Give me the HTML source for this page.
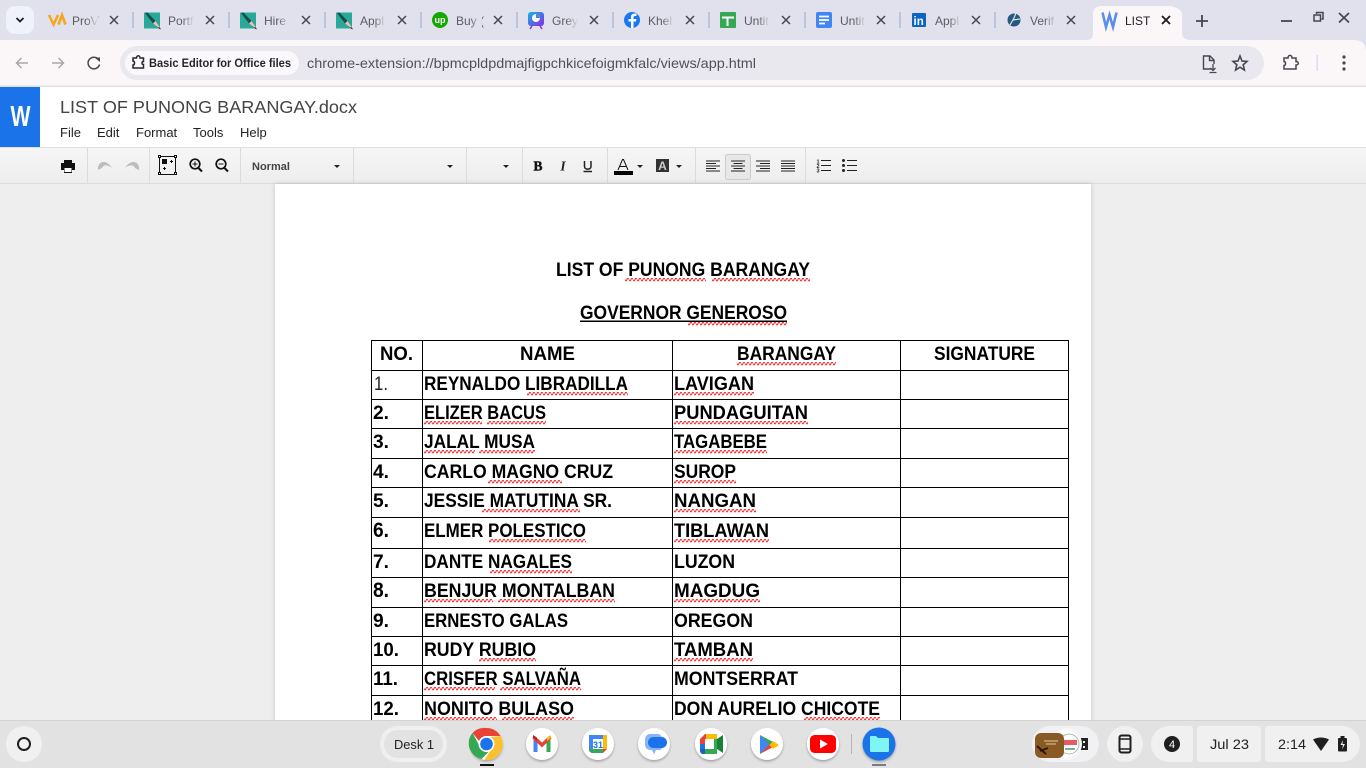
<!DOCTYPE html>
<html lang="en"><head><meta charset="utf-8"><title>LIST OF PUNONG BARANGAY.docx</title>
<style>
html,body{margin:0;padding:0;width:1366px;height:768px;overflow:hidden;background:#eee}
svg{display:block;font-family:"Liberation Sans",sans-serif}
.d{font-weight:700;font-size:19.5px;fill:#000}
.t{font-size:12px;fill:#5b5c63}
.m{font-size:13px;fill:#222}
.ln{stroke:#000;stroke-width:1;shape-rendering:crispEdges}
.sep{stroke:#b9c5e0;stroke-width:2}
.ts{stroke:#dcdcdc;stroke-width:1;shape-rendering:crispEdges}
</style></head><body>
<svg width="1366" height="768" viewBox="0 0 1366 768" xmlns="http://www.w3.org/2000/svg">
<defs>
<pattern id="sq" patternUnits="userSpaceOnUse" width="4" height="4"><path d="M0 1.500 Q1 4.300 2 1.500 Q3 -1.300 4 1.500" fill="none" stroke="#f03030" stroke-width="1.100"/></pattern>
<linearGradient id="tb" x1="0" y1="0" x2="0" y2="1"><stop offset="0" stop-color="#f6f6f6"/><stop offset="1" stop-color="#ededed"/></linearGradient>
<linearGradient id="fade"><stop offset="0" stop-color="#e0e1ec" stop-opacity="0"/><stop offset="1" stop-color="#e0e1ec"/></linearGradient>
<linearGradient id="grey" x1="0" y1="0" x2="1" y2="1"><stop offset="0" stop-color="#12b5e8"/><stop offset="1" stop-color="#8b2be2"/></linearGradient>
<filter id="sh" x="-30%" y="-30%" width="160%" height="170%"><feDropShadow dx="0" dy="1.5" stdDeviation="1.2" flood-color="#000" flood-opacity=".3"/></filter>
<filter id="pg" x="-3%" y="-3%" width="106%" height="106%"><feDropShadow dx="0" dy="0" stdDeviation="2.5" flood-color="#000" flood-opacity=".18"/></filter>
<symbol id="x" width="12" height="12" viewBox="0 0 12 12" overflow="visible"><path d="M2 2 10 10M10 2 2 10" stroke="#45464f" stroke-width="1.500" fill="none"/></symbol>
<symbol id="pen" width="17" height="17" viewBox="0 0 17 17" overflow="visible"><rect width="16" height="16" y=".5" fill="#2aa99b"/><path d="M1 1 3.500 .5 11.500 9 9 11.500Z" fill="#14504a"/><path d="M9 11.500 11.500 9 15.500 15 16 16.500Z" fill="#f5bfa6"/><path d="M14.500 15.500 16.500 17" stroke="#222" stroke-width="1"/></symbol>
<symbol id="al" width="16" height="14" viewBox="0 0 16 14"><path d="M1 1.500H15M1 4H11M1 6.500H15M1 9H11M1 11.500H15" stroke="#222" stroke-width="1" fill="none"/></symbol>
</defs>

<!-- tab strip -->
<rect width="1366" height="40" fill="#e0e1ec"/>
<rect x="6" y="6" width="28" height="28" rx="9" fill="#eff1fb"/>
<path d="M16.500 18 20 21.500 23.500 18" fill="none" stroke="#1b1b22" stroke-width="1.800"/>

<path d="M49 15 53.500 24.500 58 15M58.500 24.500 62 15 65.500 24.500" fill="none" stroke="#f5a623" stroke-width="2.600"/>
<text class="t" x="72" y="25" font-size="12">ProV</text><rect x="86" y="10" width="12" height="20" fill="url(#fade)"/>
<use href="#x" x="108" y="14"/><line class="sep" x1="133" y1="12" x2="133" y2="28"/>

<use href="#pen" x="144" y="12"/>
<text class="t" x="168" y="25">Portf</text><rect x="182" y="10" width="12" height="20" fill="url(#fade)"/>
<use href="#x" x="204" y="14"/><line class="sep" x1="229" y1="12" x2="229" y2="28"/>

<use href="#pen" x="240" y="12"/>
<text class="t" x="264" y="25">Hire</text><rect x="278" y="10" width="12" height="20" fill="url(#fade)"/>
<use href="#x" x="300" y="14"/><line class="sep" x1="325" y1="12" x2="325" y2="28"/>

<use href="#pen" x="336" y="12"/>
<text class="t" x="360" y="25">Appl</text><rect x="374" y="10" width="12" height="20" fill="url(#fade)"/>
<use href="#x" x="396" y="14"/><line class="sep" x1="421" y1="12" x2="421" y2="28"/>

<circle cx="440" cy="20" r="8" fill="#14a800"/><text x="440" y="23" text-anchor="middle" font-size="9" font-weight="700" fill="#fff">up</text>
<text class="t" x="456" y="25">Buy (</text><rect x="470" y="10" width="12" height="20" fill="url(#fade)"/>
<use href="#x" x="492" y="14"/><line class="sep" x1="517" y1="12" x2="517" y2="28"/>

<rect x="528" y="12" width="16" height="14" rx="3" fill="url(#grey)"/><circle cx="536" cy="18" r="4" fill="#fff"/><path d="M536 18V14A4 4 0 0 1 540 18Z" fill="#3a8be0"/><path d="M532 26 530 29M540 26 542 29" stroke="#8b2be2" stroke-width="1.500"/>
<text class="t" x="552" y="25">Grey</text><rect x="566" y="10" width="12" height="20" fill="url(#fade)"/>
<use href="#x" x="588" y="14"/><line class="sep" x1="613" y1="12" x2="613" y2="28"/>

<circle cx="632" cy="20" r="8" fill="#1877f2"/><path d="M633.500 28V21.500H636L636.400 19H633.500V17.300C633.500 16.500 634 16 634.900 16H636.500V13.600C635 13.300 631 13 631 16.800V19H628.500V21.500H631V28Z" fill="#fff"/>
<text class="t" x="648" y="25">Khel</text><rect x="662" y="10" width="12" height="20" fill="url(#fade)"/>
<use href="#x" x="684" y="14"/><line class="sep" x1="709" y1="12" x2="709" y2="28"/>

<rect x="720" y="12" width="16" height="16" rx="1" fill="#34a853"/><path d="M722 17.500H734M727.500 17.500V26" stroke="#fff" stroke-width="2" fill="none"/>
<text class="t" x="744" y="25">Untit</text><rect x="758" y="10" width="12" height="20" fill="url(#fade)"/>
<use href="#x" x="780" y="14"/><line class="sep" x1="805" y1="12" x2="805" y2="28"/>

<rect x="816" y="12" width="16" height="16" rx="2" fill="#4285f4"/><path d="M819 16.500H829M819 20H829M819 23.500H825" stroke="#fff" stroke-width="1.700" fill="none"/>
<text class="t" x="840" y="25">Untit</text><rect x="854" y="10" width="12" height="20" fill="url(#fade)"/>
<use href="#x" x="875" y="14"/><line class="sep" x1="900" y1="12" x2="900" y2="28"/>

<rect x="912" y="13" width="14" height="14" rx="1" fill="#0a66c2"/><text x="913.500" y="25" font-size="11.500" font-weight="700" fill="#fff">in</text>
<text class="t" x="935" y="25">Appl</text><rect x="949" y="10" width="12" height="20" fill="url(#fade)"/>
<use href="#x" x="970" y="14"/><line class="sep" x1="995" y1="12" x2="995" y2="28"/>

<circle cx="1014" cy="20" r="6.500" fill="#245a7e"/><path d="M1010 25 1014 18 1016 13M1013 20 1020 19" stroke="#e0e1ec" stroke-width="1.200" fill="none"/>
<text class="t" x="1030" y="25">Verif</text><rect x="1044" y="10" width="12" height="20" fill="url(#fade)"/>
<use href="#x" x="1065" y="14"/>

<!-- active tab -->
<path d="M1087 40C1092 40 1093 37 1093 33V14C1093 9 1096 6 1101 6H1168C1173 6 1182 9 1182 14V33C1182 37 1185 40 1190 40Z" fill="#fbf7f9"/>
<path d="M1102.500 12.500 1106 27 1109.500 15 1113 27 1116.500 12.500" fill="none" stroke="#5a8fe8" stroke-width="2.600"/>
<text x="1125" y="25" font-size="12" fill="#1f1f25">LIST</text>
<path d="M1162 16 1170 24M1170 16 1162 24" stroke="#1b1b22" stroke-width="1.800"/>

<path d="M1202 15V27M1196 21H1208" stroke="#45464f" stroke-width="1.800"/>
<path d="M1281 21H1292" stroke="#45464f" stroke-width="1.800"/>
<path d="M1316.500 14V12.500H1323V19H1321.500M1314 15H1320.500V21H1314Z" fill="none" stroke="#45464f" stroke-width="1.500"/>
<path d="M1339 13 1349 22.500M1349 13 1339 22.500" stroke="#45464f" stroke-width="1.700"/>

<!-- toolbar -->
<rect y="40" width="1366" height="46" fill="#fbf7f9"/>
<path d="M0 52Q0 40 12 40V52Z" fill="#e0e1ec" opacity="0"/><path d="M1366 52Q1366 40 1354 40H1366Z" fill="#e0e1ec"/>
<rect x="0" y="85.500" width="1366" height="1.500" fill="#e2dfe1"/>
<path d="M28 63H17M21.500 58 16.500 63 21.500 68" fill="none" stroke="#a9a9ad" stroke-width="1.500"/>
<path d="M52 63H63M58.500 58 63.500 63 58.500 68" fill="none" stroke="#a9a9ad" stroke-width="1.500"/>
<path d="M98.500 59.500A5.800 5.800 0 1 0 99.500 64.500" fill="none" stroke="#45464f" stroke-width="1.500"/><path d="M94.500 57.500H100V62Z" fill="#45464f"/>
<rect x="120" y="46" width="1144" height="34" rx="17" fill="#e9e8ee"/>
<rect x="125" y="51" width="174" height="24" rx="12" fill="#fbf8fb"/>
<path d="M133 58H136.500C136.500 55 140 55 140 58H143.500V61.500C141.500 61.500 141.500 64.500 143.500 64.500V68H133V65C135 65 135 61 133 61Z" fill="none" stroke="#26262c" stroke-width="1.500"/>
<text x="149" y="67" font-size="12" font-weight="700" fill="#26262c" textLength="142" lengthAdjust="spacingAndGlyphs">Basic Editor for Office files</text>
<text x="307" y="68" font-size="14" fill="#50515a" textLength="449" lengthAdjust="spacingAndGlyphs">chrome-extension://bpmcpldpdmajfigpchkicefoigmkfalc/views/app.html</text>
<path d="M1211 69H1203.500V56H1210L1214 60V64M1209.500 56V60.500H1214" fill="none" stroke="#45464f" stroke-width="1.400"/><path d="M1213 64V70M1210.500 68 1213 70.500 1215.500 68M1209.500 72.500H1216.500" fill="none" stroke="#45464f" stroke-width="1.300"/>
<path d="M1240 56 1242 61 1247 61.400 1243.200 64.800 1244.400 70 1240 67.200 1235.600 70 1236.800 64.800 1233 61.400 1238 61Z" fill="none" stroke="#45464f" stroke-width="1.600"/>
<path d="M1284 58H1288C1288 54.500 1292 54.500 1292 58H1296V61.500C1299 61.500 1299 65 1296 65V69H1284V65.500C1286 65.500 1286 61.500 1284 61.500Z" fill="none" stroke="#45464f" stroke-width="1.500"/>
<rect x="1316.500" y="55" width="1.500" height="16" fill="#d3dff8"/>
<circle cx="1344" cy="57" r="1.600" fill="#45464f"/><circle cx="1344" cy="63" r="1.600" fill="#45464f"/><circle cx="1344" cy="69" r="1.600" fill="#45464f"/>

<!-- doc header -->
<rect y="87" width="1366" height="61" fill="#fff"/>
<rect x="0" y="87" width="40" height="60" fill="#1a73e8"/>
<text x="10.500" y="126" font-size="29" font-weight="700" fill="#fff" textLength="20" lengthAdjust="spacingAndGlyphs">W</text>
<text x="60" y="113" font-size="17.500" fill="#444" textLength="297" lengthAdjust="spacingAndGlyphs">LIST OF PUNONG BARANGAY.docx</text>
<text class="m" x="60" y="137">File</text><text class="m" x="97" y="137">Edit</text><text class="m" x="136" y="137">Format</text><text class="m" x="193" y="137">Tools</text><text class="m" x="240" y="137">Help</text>

<!-- editor toolbar -->
<rect y="147" width="1366" height="37" fill="url(#tb)"/>
<line x1="0" y1="147.500" x2="1366" y2="147.500" stroke="#e0e0e0"/><line x1="0" y1="183.500" x2="1366" y2="183.500" stroke="#dcdcdc"/>
<line class="ts" x1="87.500" y1="148" x2="87.500" y2="183"/><line class="ts" x1="149.500" y1="148" x2="149.500" y2="183"/><line class="ts" x1="240.500" y1="148" x2="240.500" y2="183"/><line class="ts" x1="353.500" y1="148" x2="353.500" y2="183"/><line class="ts" x1="466.500" y1="148" x2="466.500" y2="183"/><line class="ts" x1="522.500" y1="148" x2="522.500" y2="183"/><line class="ts" x1="607.500" y1="148" x2="607.500" y2="183"/><line class="ts" x1="695.500" y1="148" x2="695.500" y2="183"/><line class="ts" x1="805.500" y1="148" x2="805.500" y2="183"/>
<path d="M64 160H72V163H75V170H72V173H64V170H61V163H64Z" fill="#111"/><rect x="64.500" y="168" width="7" height="4" fill="#fff"/>
<path d="M98 167C100 160 107 160 112 168C107 164 103 165 102 168L98 170Z" fill="#bdbdbd"/><path d="M139 167C137 160 130 160 125 168C130 164 134 165 135 168L139 170Z" fill="#bdbdbd"/>
<rect x="159.500" y="156.500" width="16" height="18" fill="none" stroke="#111" stroke-width="1"/>
<g fill="#fff" stroke="#111"><rect x="158.500" y="155.500" width="2" height="2"/><rect x="174.500" y="155.500" width="2" height="2"/><rect x="158.500" y="172.500" width="2" height="2"/><rect x="174.500" y="172.500" width="2" height="2"/></g>
<rect x="162" y="159" width="5" height="5" fill="#111"/><path d="M171.500 160V163M170 161.500H173M164.500 167V170M163 168.500H166" stroke="#111" stroke-width="1"/>
<circle cx="195" cy="164" r="4.800" fill="none" stroke="#111" stroke-width="1.700"/><path d="M198.500 168 202 171.500" stroke="#111" stroke-width="2"/><path d="M195 161.500V166.500M192.500 164H197.500" stroke="#111"/>
<circle cx="221" cy="164" r="4.800" fill="none" stroke="#111" stroke-width="1.700"/><path d="M224.500 168 228 171.500" stroke="#111" stroke-width="2"/><path d="M218.500 164H223.500" stroke="#111"/>
<text x="252" y="170" font-size="11" font-weight="700" fill="#444">Normal</text>
<path d="M334 165H340L337 168Z" fill="#222"/><path d="M447 165H453L450 168Z" fill="#222"/><path d="M503 165H509L506 168Z" fill="#222"/>
<text x="538" y="170.500" text-anchor="middle" font-size="13.500" font-weight="700" fill="#111" stroke="#111" stroke-width=".4" font-family="Liberation Serif">B</text>
<text x="563" y="170.500" text-anchor="middle" font-size="13.500" font-style="italic" font-weight="700" fill="#222" font-family="Liberation Serif">I</text>
<path d="M584.500 161V166.500C584.500 170 591 170 591 166.500V161M583.500 171.500H592" fill="none" stroke="#222" stroke-width="1.500"/>
<path d="M618 170 622.500 159.500H623.500L628 170M620 166.500H626" fill="none" stroke="#111"/><rect x="614" y="171" width="19" height="4" fill="#000"/>
<path d="M637 165H643L640 168Z" fill="#222"/>
<rect x="656" y="159" width="13" height="13" fill="#333"/><text x="662.500" y="170" text-anchor="middle" font-size="12" font-weight="700" fill="#ccc">A</text>
<path d="M676 165H682L679 168Z" fill="#222"/>
<rect x="725.500" y="154.500" width="25" height="25" rx="2" fill="#e8e8e8" stroke="#ccc"/>
<use href="#al" x="705" y="159.500"/>
<path d="M731 161H745M733.500 163.500H742.500M731 166H745M733.500 168.500H742.500M731 171H745" stroke="#222" fill="none"/>
<path d="M756 161H770M760 163.500H770M756 166H770M760 168.500H770M756 171H770" stroke="#222" fill="none"/>
<path d="M781 161H795M781 163.500H795M781 166H795M781 168.500H795M781 171H795" stroke="#222" fill="none"/>
<text x="816.500" y="163.500" font-size="5.500" font-weight="700" fill="#222">1</text><text x="816.500" y="168" font-size="5.500" font-weight="700" fill="#222">2</text><text x="816.500" y="172.500" font-size="5.500" font-weight="700" fill="#222">3</text>
<path d="M821 160.500H831M821 165.500H831M821 170.500H831" stroke="#222"/>
<circle cx="843.500" cy="160.500" r="1.500" fill="#222"/><circle cx="843.500" cy="165.500" r="1.500" fill="#222"/><circle cx="843.500" cy="170.500" r="1.500" fill="#222"/><path d="M847 160.500H857M847 165.500H857M847 170.500H857" stroke="#222"/>

<!-- document -->
<rect y="184" width="1366" height="536" fill="#eeeeee"/>
<rect x="275" y="184" width="816" height="560" fill="#fff" filter="url(#pg)"/>

<text class="d" x="556" y="276" textLength="254" lengthAdjust="spacingAndGlyphs">LIST OF PUNONG BARANGAY</text>
<text class="d" x="580" y="319" textLength="207" lengthAdjust="spacingAndGlyphs">GOVERNOR GENEROSO</text>
<rect x="580" y="320.500" width="207" height="1.500" fill="#000"/>
<rect transform="translate(625,278)" width="81" height="4" fill="url(#sq)"/><rect transform="translate(712,278)" width="98" height="4" fill="url(#sq)"/>
<rect transform="translate(688,322)" width="99" height="4" fill="url(#sq)"/>

<!-- table lines -->
<g class="ln">
<line x1="371" y1="340.500" x2="1069" y2="340.500"/><line x1="371" y1="370.500" x2="1069" y2="370.500"/><line x1="371" y1="399.500" x2="1069" y2="399.500"/><line x1="371" y1="428.500" x2="1069" y2="428.500"/><line x1="371" y1="458.500" x2="1069" y2="458.500"/><line x1="371" y1="487.500" x2="1069" y2="487.500"/><line x1="371" y1="517.500" x2="1069" y2="517.500"/><line x1="371" y1="548.500" x2="1069" y2="548.500"/><line x1="371" y1="577.500" x2="1069" y2="577.500"/><line x1="371" y1="607.500" x2="1069" y2="607.500"/><line x1="371" y1="636.500" x2="1069" y2="636.500"/><line x1="371" y1="665.500" x2="1069" y2="665.500"/><line x1="371" y1="695.500" x2="1069" y2="695.500"/>
<line x1="371.500" y1="340" x2="371.500" y2="720"/><line x1="422.500" y1="340" x2="422.500" y2="720"/><line x1="672.500" y1="340" x2="672.500" y2="720"/><line x1="900.500" y1="340" x2="900.500" y2="720"/><line x1="1068.500" y1="340" x2="1068.500" y2="720"/>
</g>

<text class="d" x="380" y="360" textLength="33" lengthAdjust="spacingAndGlyphs">NO.</text>
<text class="d" x="520" y="360" textLength="55" lengthAdjust="spacingAndGlyphs">NAME</text>
<text class="d" x="737" y="360" textLength="99" lengthAdjust="spacingAndGlyphs">BARANGAY</text>
<text class="d" x="934" y="360" textLength="101" lengthAdjust="spacingAndGlyphs">SIGNATURE</text>
<rect transform="translate(737,362)" width="99" height="4" fill="url(#sq)"/>

<text x="374" y="390" font-size="19" fill="#222" textLength="14" lengthAdjust="spacingAndGlyphs">1.</text>
<text class="d" x="373" y="419" textLength="16" lengthAdjust="spacingAndGlyphs">2.</text>
<text class="d" x="373" y="448" textLength="16" lengthAdjust="spacingAndGlyphs">3.</text>
<text class="d" x="373" y="478" textLength="16" lengthAdjust="spacingAndGlyphs">4.</text>
<text class="d" x="373" y="507" textLength="16" lengthAdjust="spacingAndGlyphs">5.</text>
<text class="d" x="373" y="537" style="font-size:21px" textLength="16" lengthAdjust="spacingAndGlyphs">6.</text>
<text class="d" x="373" y="568" textLength="16" lengthAdjust="spacingAndGlyphs">7.</text>
<text class="d" x="373" y="597" style="font-size:21px" textLength="16" lengthAdjust="spacingAndGlyphs">8.</text>
<text class="d" x="373" y="627" textLength="16" lengthAdjust="spacingAndGlyphs">9.</text>
<text class="d" x="373" y="656" textLength="26" lengthAdjust="spacingAndGlyphs">10.</text>
<text class="d" x="373" y="685" textLength="25" lengthAdjust="spacingAndGlyphs">11.</text>
<text class="d" x="373" y="715" textLength="26" lengthAdjust="spacingAndGlyphs">12.</text>

<text class="d" x="424" y="390" textLength="204" lengthAdjust="spacingAndGlyphs">REYNALDO LIBRADILLA</text>
<text class="d" x="424" y="419" textLength="122" lengthAdjust="spacingAndGlyphs">ELIZER BACUS</text>
<text class="d" x="424" y="448" textLength="111" lengthAdjust="spacingAndGlyphs">JALAL MUSA</text>
<text class="d" x="424" y="478" textLength="189" lengthAdjust="spacingAndGlyphs">CARLO MAGNO CRUZ</text>
<text class="d" x="424" y="507" textLength="188" lengthAdjust="spacingAndGlyphs">JESSIE MATUTINA SR.</text>
<text class="d" x="424" y="537" textLength="162" lengthAdjust="spacingAndGlyphs">ELMER POLESTICO</text>
<text class="d" x="424" y="568" textLength="148" lengthAdjust="spacingAndGlyphs">DANTE NAGALES</text>
<text class="d" x="424" y="597" textLength="191" lengthAdjust="spacingAndGlyphs">BENJUR MONTALBAN</text>
<text class="d" x="424" y="627" textLength="144" lengthAdjust="spacingAndGlyphs">ERNESTO GALAS</text>
<text class="d" x="424" y="656" textLength="112" lengthAdjust="spacingAndGlyphs">RUDY RUBIO</text>
<text class="d" x="424" y="685" textLength="157" lengthAdjust="spacingAndGlyphs">CRISFER SALVAÑA</text>
<text class="d" x="424" y="715" textLength="150" lengthAdjust="spacingAndGlyphs">NONITO BULASO</text>

<text class="d" x="674" y="390" textLength="80" lengthAdjust="spacingAndGlyphs">LAVIGAN</text>
<text class="d" x="674" y="419" textLength="134" lengthAdjust="spacingAndGlyphs">PUNDAGUITAN</text>
<text class="d" x="674" y="448" textLength="93" lengthAdjust="spacingAndGlyphs">TAGABEBE</text>
<text class="d" x="674" y="478" textLength="62" lengthAdjust="spacingAndGlyphs">SUROP</text>
<text class="d" x="674" y="507" textLength="82" lengthAdjust="spacingAndGlyphs">NANGAN</text>
<text class="d" x="674" y="537" textLength="95" lengthAdjust="spacingAndGlyphs">TIBLAWAN</text>
<text class="d" x="674" y="568" textLength="61" lengthAdjust="spacingAndGlyphs">LUZON</text>
<text class="d" x="674" y="597" textLength="86" lengthAdjust="spacingAndGlyphs">MAGDUG</text>
<text class="d" x="674" y="627" textLength="79" lengthAdjust="spacingAndGlyphs">OREGON</text>
<text class="d" x="674" y="656" textLength="79" lengthAdjust="spacingAndGlyphs">TAMBAN</text>
<text class="d" x="674" y="685" textLength="124" lengthAdjust="spacingAndGlyphs">MONTSERRAT</text>
<text class="d" x="674" y="715" textLength="206" lengthAdjust="spacingAndGlyphs">DON AURELIO CHICOTE</text>

<!-- spell squiggles -->
<rect transform="translate(527,392)" width="101" height="4" fill="url(#sq)"/><rect transform="translate(674,392)" width="80" height="4" fill="url(#sq)"/>
<rect transform="translate(424,421)" width="58" height="4" fill="url(#sq)"/><rect transform="translate(487,421)" width="59" height="4" fill="url(#sq)"/><rect transform="translate(674,421)" width="134" height="4" fill="url(#sq)"/>
<rect transform="translate(424,450)" width="51" height="4" fill="url(#sq)"/><rect transform="translate(479,450)" width="56" height="4" fill="url(#sq)"/><rect transform="translate(674,450)" width="93" height="4" fill="url(#sq)"/>
<rect transform="translate(488,480)" width="74" height="4" fill="url(#sq)"/><rect transform="translate(674,480)" width="62" height="4" fill="url(#sq)"/>
<rect transform="translate(482,509)" width="98" height="4" fill="url(#sq)"/><rect transform="translate(674,509)" width="82" height="4" fill="url(#sq)"/>
<rect transform="translate(489,539)" width="97" height="4" fill="url(#sq)"/><rect transform="translate(674,539)" width="95" height="4" fill="url(#sq)"/>
<rect transform="translate(490,570)" width="82" height="4" fill="url(#sq)"/>
<rect transform="translate(424,599)" width="69" height="4" fill="url(#sq)"/><rect transform="translate(498,599)" width="117" height="4" fill="url(#sq)"/><rect transform="translate(674,599)" width="86" height="4" fill="url(#sq)"/>
<rect transform="translate(479,658)" width="57" height="4" fill="url(#sq)"/><rect transform="translate(674,658)" width="79" height="4" fill="url(#sq)"/>
<rect transform="translate(424,687)" width="71" height="4" fill="url(#sq)"/><rect transform="translate(500,687)" width="81" height="4" fill="url(#sq)"/>
<rect transform="translate(424,717)" width="73" height="3" fill="url(#sq)"/><rect transform="translate(502,717)" width="72" height="3" fill="url(#sq)"/><rect transform="translate(804,717)" width="76" height="3" fill="url(#sq)"/>

<!-- shelf -->
<rect y="720" width="1366" height="48" fill="#e3e2e3"/>
<rect y="720" width="1366" height="1" fill="#d2d2d2"/>
<circle cx="24" cy="744" r="18" fill="#f1f0f1"/><circle cx="24" cy="744" r="6" fill="none" stroke="#1f1f1f" stroke-width="2"/>
<rect x="382" y="728" width="63" height="32" rx="16" fill="#e3e2e3" stroke="#f0eff0" stroke-width="4"/>
<text x="394" y="749" font-size="13" fill="#222" textLength="40" lengthAdjust="spacingAndGlyphs">Desk 1</text>

<!-- chrome -->
<g filter="url(#sh)"><circle cx="486.500" cy="744" r="16" fill="#fff"/></g>
<g transform="translate(.5 0)">
<path d="M486 728A16 16 0 0 1 500 736H486A8 8 0 0 0 478.500 741L472 733A16 16 0 0 1 486 728Z" fill="#ea4335"/>
<path d="M472 733 479 746A8 8 0 0 0 488 752L481 759A16 16 0 0 1 472 733Z" fill="#34a853"/>
<path d="M500 736A16 16 0 0 1 486 760H484L491 749A8 8 0 0 0 490 737Z" fill="#fbc02d"/>
<circle cx="486" cy="744" r="8" fill="#fff"/><circle cx="486" cy="744" r="6.300" fill="#1a73e8"/>
</g>
<rect x="480" y="764" width="14" height="2" fill="#111"/>

<!-- gmail -->
<g filter="url(#sh)"><circle cx="542" cy="744" r="16" fill="#fff"/></g>
<path d="M533.500 736V752H537.500V741Z" fill="#4285f4"/><path d="M550.500 736V752H546.500V741Z" fill="#34a853"/><path d="M533.500 737 542 745 550.500 737" fill="none" stroke="#ea4335" stroke-width="3.500"/><path d="M533 735 537 738V741L533 738Z" fill="#c5221f"/><path d="M547 738 551 735V738L547 741Z" fill="#fbbc04"/>

<!-- calendar -->
<g filter="url(#sh)"><circle cx="598" cy="744" r="16" fill="#fff"/></g>
<rect x="589" y="735" width="18" height="18" fill="#fff"/><path d="M589 735H603V739H593V749H589Z" fill="#4285f4"/><path d="M603 735H607V749H603Z" fill="#fbbc04"/><path d="M589 749H603V753H591.500L589 751Z" fill="#34a853"/><path d="M603 749H607L603 753Z" fill="#ea4335"/>
<text x="598" y="748" text-anchor="middle" font-size="9" font-weight="700" fill="#1a73e8">31</text>

<!-- messages -->
<g filter="url(#sh)"><circle cx="654" cy="744" r="16" fill="#fff"/></g>
<path d="M645 739A5 5 0 0 1 650 734H658A5 5 0 0 1 662 738V748A3 3 0 0 1 660 750H656L654 754.500 652 750H650A5 5 0 0 1 645 745Z" fill="#8ab4f8"/>
<rect x="648" y="737" width="19" height="11" rx="5.500" fill="#1a73e8"/>

<!-- meet -->
<g filter="url(#sh)"><circle cx="711" cy="744" r="16" fill="#fff"/></g>
<path d="M700 739 705 734H717V739H705V744H700Z" fill="#ea4335"/><path d="M706 734H717V739H706Z" fill="#fbbc04"/><path d="M700 744H705V749H700Z" fill="#1a73e8"/><path d="M700 749H705V754H703A3 3 0 0 1 700 751Z" fill="#1565c0"/><path d="M705 749H717V754H705Z" fill="#34a853"/><path d="M717 739 723 735V753L717 749V744Z" fill="#188038"/><rect x="714" y="739" width="3" height="10" fill="#34a853"/>

<!-- play -->
<g filter="url(#sh)"><circle cx="767" cy="744" r="16" fill="#fff"/></g>
<path d="M760 735 771 745 760 754Z" fill="#4285f4"/><path d="M760 735 775 743 771 746Z" fill="#34a853"/><path d="M760 754 775 746 771 743Z" fill="#ea4335"/><path d="M773 741 779 745 773 749 769.500 745Z" fill="#fbbc04"/>

<!-- youtube -->
<g filter="url(#sh)"><circle cx="823" cy="744" r="16" fill="#fff"/></g>
<rect x="810" y="735" width="26" height="18" rx="4.500" fill="#ff0000"/><path d="M820 739.500 828 744 820 748.500Z" fill="#fff"/>

<rect x="851" y="734" width="1" height="20" fill="#b5b5b5"/>
<!-- files -->
<g filter="url(#sh)"><circle cx="879" cy="744" r="16.500" fill="#1a73e8"/></g>
<path d="M870 737A1 1 0 0 1 871 736H876L878 738H888A1 1 0 0 1 889 739V751A1 1 0 0 1 888 752H871A1 1 0 0 1 870 751Z" fill="#80f5f5"/>
<rect x="872" y="764" width="14" height="2" fill="#5f6368" opacity=".8"/>

<!-- tray -->
<rect x="1032" y="726" width="67" height="36" rx="18" fill="#f1f0f3"/>
<path d="M1078 738A1 1 0 0 1 1079 738H1088V750H1079Z" fill="#222"/><rect x="1083" y="741" width="2" height="2" fill="#f1f0f3"/><rect x="1083" y="746" width="2" height="2" fill="#f1f0f3"/>
<circle cx="1066" cy="744" r="16" fill="#f6f5f7"/>
<circle cx="1066" cy="744" r="14" fill="#fff"/>
<rect x="1064" y="740" width="13" height="5" fill="#e5484d" opacity=".9"/><path d="M1065 749H1075" stroke="#8aa88a" stroke-width="2"/><circle cx="1069" cy="744" r="10" fill="none" stroke="#a8bda0" stroke-width="1"/>
<rect x="1035" y="733" width="29" height="25" rx="6" fill="#8a5a24"/><path d="M1037 746 1046 754M1040 751 1048 748" stroke="#2a1708" stroke-width="2"/><path d="M1044 741H1058M1046 744H1056" stroke="#e0c9a0" stroke-width="1"/>
<circle cx="1125" cy="744" r="18" fill="#f1f0f1"/>
<rect x="1119.500" y="735.500" width="11" height="17" rx="2" fill="none" stroke="#1f1f1f" stroke-width="2"/><path d="M1120 739H1130M1120 749H1130" stroke="#1f1f1f" stroke-width="1.500"/>
<path d="M1169 726H1190A3 3 0 0 1 1193 729V759A3 3 0 0 1 1190 762H1169A18 18 0 0 1 1169 726Z" fill="#f1f0f1"/>
<circle cx="1172" cy="744" r="8" fill="#1f1f1f"/><text x="1172" y="748" text-anchor="middle" font-size="11" fill="#fff">4</text>
<rect x="1197" y="726" width="64" height="36" rx="3" fill="#f1f0f1"/>
<text x="1210" y="749" font-size="13.500" fill="#222" textLength="39" lengthAdjust="spacingAndGlyphs">Jul 23</text>
<path d="M1268 726H1342A18 18 0 0 1 1342 762H1268A3 3 0 0 1 1265 759V729A3 3 0 0 1 1268 726Z" fill="#f1f0f1"/>
<text x="1278" y="749" font-size="13.500" fill="#222" textLength="28" lengthAdjust="spacingAndGlyphs">2:14</text>
<path d="M1313 739.500Q1321 735.500 1329 739.500L1321 751Z" fill="#1f1f1f"/>
<rect x="1338" y="738" width="9" height="13.500" rx="1" fill="#1f1f1f"/><rect x="1340.500" y="736" width="4" height="2" fill="#1f1f1f"/><path d="M1343 740 1340.500 745H1343L1342 749.500 1345 744H1342.500Z" fill="#f1f0f1"/>
</svg>
</body></html>
